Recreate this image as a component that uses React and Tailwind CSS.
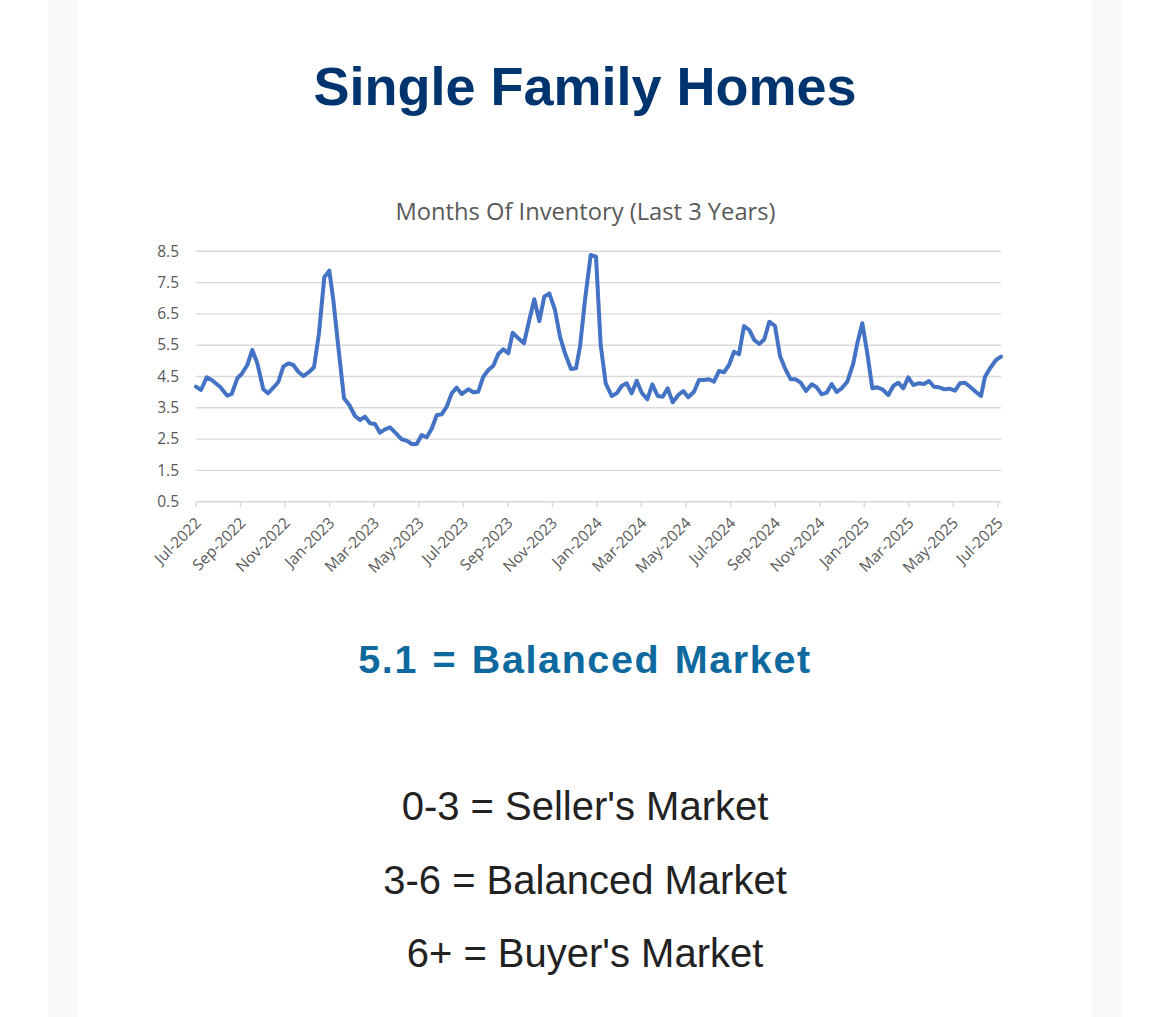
import React from "react";

const ticks = [
  "Jul-2022", "Sep-2022", "Nov-2022", "Jan-2023", "Mar-2023", "May-2023",
  "Jul-2023", "Sep-2023", "Nov-2023", "Jan-2024", "Mar-2024", "May-2024",
  "Jul-2024", "Sep-2024", "Nov-2024", "Jan-2025", "Mar-2025", "May-2025",
  "Jul-2025",
];

const yLabels = ["8.5", "7.5", "6.5", "5.5", "4.5", "3.5", "2.5", "1.5", "0.5"];

// traced months-of-inventory series, page pixel coords
const series = [
  [196, 386.7], [201, 390], [206.7, 377.3], [211.7, 380], [220, 386.7], [227.3, 395.7],
  [231.7, 394], [237.3, 378.3], [241.7, 374], [247.3, 365], [252.3, 350], [257.3, 363.3],
  [263.3, 389.3], [268, 393.3], [273.3, 387.7], [278.3, 382], [283.3, 366.7], [288.3, 363.3],
  [293.3, 365], [298.3, 371.7], [303.3, 376], [308.3, 372.7], [314, 367.3], [319, 333.3],
  [324.3, 277.3], [329.3, 270.7], [333.3, 300], [338.3, 346.7], [344, 398.3], [349.3, 405],
  [355, 416], [360, 420], [365, 416.7], [370, 423.3], [375, 424], [380, 432.7],
  [385, 429.3], [390, 427.3], [396, 433.3], [401.7, 439.3], [406.7, 440.7], [411.7, 444],
  [416.7, 444], [421.7, 435], [426.7, 437.3], [431.7, 428.7], [436.7, 415.3], [441.7, 414.3],
  [446.7, 406.7], [451.7, 393.3], [456.7, 387.7], [461.7, 394], [468.3, 389.3], [473.3, 392.3],
  [478.3, 391.7], [483.3, 376.7], [488.3, 370], [493.3, 365.7], [498.3, 354], [503.3, 349.3],
  [508.3, 353.3], [512.7, 332.7], [518.3, 338.3], [524, 343.3], [529.3, 320], [534.3, 299.3],
  [539.3, 321], [544.3, 296.7], [549.3, 293.3], [555, 310], [560, 336.7], [565, 353.3],
  [571, 369], [576, 368.3], [580, 346.7], [585, 300], [590.7, 255], [596, 256.7],
  [600.7, 345], [605.7, 383.3], [611.7, 396], [616.7, 393.3], [621.7, 386], [626.7, 383.3],
  [631.7, 393.3], [636.7, 380.7], [641.7, 392.7], [647.3, 399.3], [652.3, 384.3], [657.7, 396],
  [662.7, 396.7], [667.7, 388.3], [672.7, 402.3], [678.3, 395], [683.3, 391], [688.3, 397.3],
  [694, 391.7], [699, 380], [704, 380], [709, 379.3], [714, 381.7], [719, 371],
  [724, 372.3], [729, 365], [734, 351.7], [739, 354.3], [744, 326], [749.3, 330],
  [754.3, 340], [759.3, 344], [764.3, 339.3], [769.3, 321.7], [775, 326], [780, 356],
  [785, 368.3], [790.7, 379.3], [795.7, 379.3], [800.7, 382.7], [806, 391], [811.7, 384.3],
  [816.7, 387.3], [821.7, 394.3], [826.7, 392.7], [831.7, 384], [836.7, 392], [841.7, 388.3],
  [847.3, 381.7], [853.3, 363.3], [857.3, 343.3], [862.3, 323.3], [867.3, 353.3], [872.3, 388.3],
  [877.3, 387.3], [882.3, 389.3], [888.3, 395], [893.3, 386], [898.3, 382.7], [903.3, 388.3],
  [908.3, 377.3], [913.3, 385], [918.3, 383.3], [924, 384], [929, 381], [934, 386.7],
  [939.3, 387.3], [944.3, 389.3], [949.3, 388.7], [955, 390.7], [960, 383.3], [965, 382.7],
  [970, 386.7], [975.7, 391.7], [981, 396], [985, 376.7], [990, 368.3], [996, 360],
  [1001, 356.7],
];

const GRID_TOP = 251.3;
const GRID_STEP = 31.3;
const X0 = 196;
const X_STEP = 44.55;

function InventoryChart() {
  return (
    <svg
      width="1014"
      height="410"
      viewBox="78 185 1014 410"
      className="block"
      style={{ fontFamily: '"Open Sans", sans-serif' }}
    >
      <text x="585.5" y="220" textAnchor="middle" fontSize="23.7" fill="#595959">
        Months Of Inventory (Last 3 Years)
      </text>

      {yLabels.map((label, i) => {
        const y = GRID_TOP + i * GRID_STEP;
        return (
          <g key={label}>
            <line x1={X0} x2="1001" y1={y} y2={y} stroke="#d9d9d9" strokeWidth="1.4" />
            <text x="179" y={y + 5.2} textAnchor="end" fontSize="15.5" fill="#595959">
              {label}
            </text>
          </g>
        );
      })}

      {ticks.map((label, i) => {
        const x = X0 + i * X_STEP;
        return (
          <g key={label}>
            <line x1={x} x2={x} y1="501.7" y2="507" stroke="#d9d9d9" strokeWidth="1.4" />
            <text
              x={x + 6}
              y="524"
              textAnchor="end"
              fontSize="15.5"
              fill="#595959"
              transform={`rotate(-45 ${x + 6} 524)`}
            >
              {label}
            </text>
          </g>
        );
      })}

      <polyline
        points={series.map((p) => p.join(",")).join(" ")}
        fill="none"
        stroke="#4472c4"
        strokeWidth="4"
        strokeLinejoin="round"
        strokeLinecap="round"
      />
    </svg>
  );
}

export default function App() {
  return (
    <div
      className="min-h-screen bg-white flex justify-center"
      style={{ fontFamily: '"Liberation Sans", Arial, sans-serif' }}
    >
      <div className="w-[1074px] bg-[#f9f9f9] px-[30px]">
        <div className="min-h-screen bg-white flex flex-col items-center">
          <h1 className="pt-[59px] text-[54px] leading-[54px] font-bold text-[#00346e]">
            Single Family Homes
          </h1>

          <div className="mt-[72px]">
            <InventoryChart />
          </div>

          {/* current reading */}
          <p className="mt-[44px] text-[39.5px] leading-[40px] font-bold text-[#0e6a9e] tracking-[1.6px] [word-spacing:2px]">
            5.1 = Balanced Market
          </p>

          {/* legend */}
          <div className="mt-[91px] flex flex-col items-center text-[40px] leading-[73.5px] text-[#222]">
            <p>0-3 = Seller's Market</p>
            <p>3-6 = Balanced Market</p>
            <p>6+ = Buyer's Market</p>
          </div>
        </div>
      </div>
    </div>
  );
}
